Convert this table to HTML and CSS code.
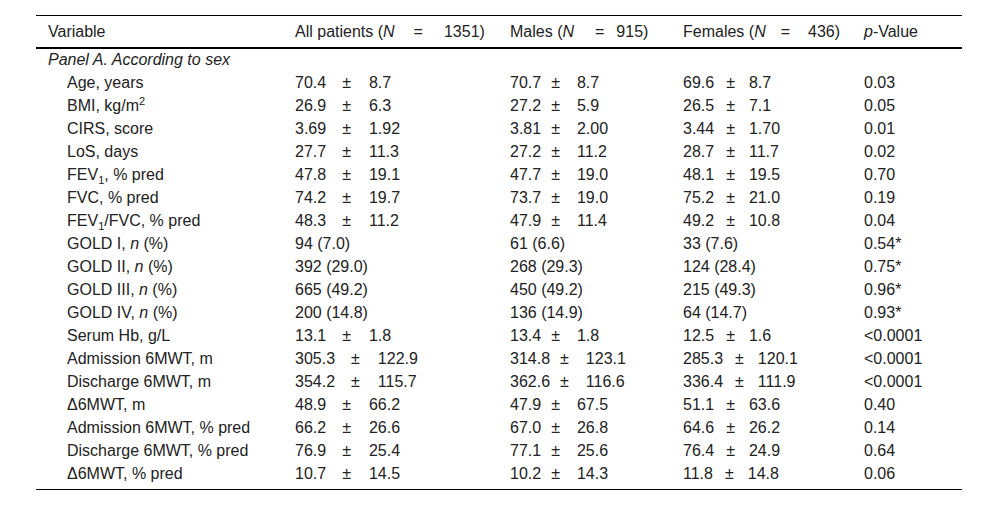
FILE: index.html
```html
<!DOCTYPE html>
<html lang="en">
<head>
<meta charset="utf-8">
<title>Table</title>
<link rel="stylesheet" href="styles.css">
</head>
<body>
<table class="data">
  <colgroup>
    <col class="w1"><col class="w2"><col class="w3"><col class="w4"><col class="w5">
  </colgroup>
  <thead>
    <tr>
      <th>Variable</th>
      <th class="c2">All patients (<i>N</i><span class="eq">=</span>1351)</th>
      <th class="c3">Males (<i>N</i><span class="eq">=</span>915)</th>
      <th class="c4">Females (<i>N</i><span class="eq">=</span>436)</th>
      <th><i>p</i>-Value</th>
    </tr>
  </thead>
  <tbody>
    <tr class="panel"><td colspan="5"><i>Panel A. According to sex</i></td></tr>
    <tr><td class="ind">Age, years</td><td class="c2">70.4<span class="pm">±</span>8.7</td><td class="c3">70.7<span class="pm">±</span>8.7</td><td class="c4">69.6<span class="pm">±</span>8.7</td><td>0.03</td></tr>
    <tr><td class="ind">BMI, kg/m<sup>2</sup></td><td class="c2">26.9<span class="pm">±</span>6.3</td><td class="c3">27.2<span class="pm">±</span>5.9</td><td class="c4">26.5<span class="pm">±</span>7.1</td><td>0.05</td></tr>
    <tr><td class="ind">CIRS, score</td><td class="c2">3.69<span class="pm">±</span>1.92</td><td class="c3">3.81<span class="pm">±</span>2.00</td><td class="c4">3.44<span class="pm">±</span>1.70</td><td>0.01</td></tr>
    <tr><td class="ind">LoS, days</td><td class="c2">27.7<span class="pm">±</span>11.3</td><td class="c3">27.2<span class="pm">±</span>11.2</td><td class="c4">28.7<span class="pm">±</span>11.7</td><td>0.02</td></tr>
    <tr><td class="ind">FEV<sub>1</sub>, % pred</td><td class="c2">47.8<span class="pm">±</span>19.1</td><td class="c3">47.7<span class="pm">±</span>19.0</td><td class="c4">48.1<span class="pm">±</span>19.5</td><td>0.70</td></tr>
    <tr><td class="ind">FVC, % pred</td><td class="c2">74.2<span class="pm">±</span>19.7</td><td class="c3">73.7<span class="pm">±</span>19.0</td><td class="c4">75.2<span class="pm">±</span>21.0</td><td>0.19</td></tr>
    <tr><td class="ind">FEV<sub>1</sub>/FVC, % pred</td><td class="c2">48.3<span class="pm">±</span>11.2</td><td class="c3">47.9<span class="pm">±</span>11.4</td><td class="c4">49.2<span class="pm">±</span>10.8</td><td>0.04</td></tr>
    <tr><td class="ind">GOLD I, <i>n</i> (%)</td><td class="c2">94 (7.0)</td><td class="c3">61 (6.6)</td><td class="c4">33 (7.6)</td><td>0.54*</td></tr>
    <tr><td class="ind">GOLD II, <i>n</i> (%)</td><td class="c2">392 (29.0)</td><td class="c3">268 (29.3)</td><td class="c4">124 (28.4)</td><td>0.75*</td></tr>
    <tr><td class="ind">GOLD III, <i>n</i> (%)</td><td class="c2">665 (49.2)</td><td class="c3">450 (49.2)</td><td class="c4">215 (49.3)</td><td>0.96*</td></tr>
    <tr><td class="ind">GOLD IV, <i>n</i> (%)</td><td class="c2">200 (14.8)</td><td class="c3">136 (14.9)</td><td class="c4">64 (14.7)</td><td>0.93*</td></tr>
    <tr><td class="ind">Serum Hb, g/L</td><td class="c2">13.1<span class="pm">±</span>1.8</td><td class="c3">13.4<span class="pm">±</span>1.8</td><td class="c4">12.5<span class="pm">±</span>1.6</td><td>&lt;0.0001</td></tr>
    <tr><td class="ind">Admission 6MWT, m</td><td class="c2">305.3<span class="pm">±</span>122.9</td><td class="c3">314.8<span class="pm">±</span>123.1</td><td class="c4">285.3<span class="pm">±</span>120.1</td><td>&lt;0.0001</td></tr>
    <tr><td class="ind">Discharge 6MWT, m</td><td class="c2">354.2<span class="pm">±</span>115.7</td><td class="c3">362.6<span class="pm">±</span>116.6</td><td class="c4">336.4<span class="pm">±</span>111.9</td><td>&lt;0.0001</td></tr>
    <tr><td class="ind">Δ6MWT, m</td><td class="c2">48.9<span class="pm">±</span>66.2</td><td class="c3">47.9<span class="pm">±</span>67.5</td><td class="c4">51.1<span class="pm">±</span>63.6</td><td>0.40</td></tr>
    <tr><td class="ind">Admission 6MWT, % pred</td><td class="c2">66.2<span class="pm">±</span>26.6</td><td class="c3">67.0<span class="pm">±</span>26.8</td><td class="c4">64.6<span class="pm">±</span>26.2</td><td>0.14</td></tr>
    <tr><td class="ind">Discharge 6MWT, % pred</td><td class="c2">76.9<span class="pm">±</span>25.4</td><td class="c3">77.1<span class="pm">±</span>25.6</td><td class="c4">76.4<span class="pm">±</span>24.9</td><td>0.64</td></tr>
    <tr class="last"><td class="ind">Δ6MWT, % pred</td><td class="c2">10.7<span class="pm">±</span>14.5</td><td class="c3">10.2<span class="pm">±</span>14.3</td><td class="c4">11.8<span class="pm">±</span>14.8</td><td>0.06</td></tr>
  </tbody>
</table>
</body>
</html>
```

FILE: styles.css
```css
html, body {
  margin: 0;
  padding: 0;
  background: #ffffff;
}

body {
  font-family: "Liberation Sans", Arial, sans-serif;
  font-size: 16px;
  color: #222222;
}

.data {
  margin: 15px 0 0 36px;
  width: 926px;
  table-layout: fixed;
  border-collapse: collapse;
  border-spacing: 0;
}

.w1 { width: 247px; }
.w2 { width: 215px; }
.w3 { width: 173px; }
.w4 { width: 181px; }
.w5 { width: 110px; }

.data th,
.data td {
  padding: 0 0 0 12px;
  text-align: left;
  font-weight: normal;
  white-space: nowrap;
  vertical-align: top;
}

.data thead tr {
  border-top: 1px solid #000;
  border-bottom: 2px solid #000;
}

.data thead th {
  height: 31px;
  line-height: 31px;
}

.data tbody td {
  height: 23px;
  line-height: 23px;
}

.data tbody tr.panel td {
  height: 22px;
  line-height: 22px;
}

.data tbody tr.last {
  border-bottom: 1px solid #000;
}

.data tbody tr.last td {
  padding-bottom: 4px;
}

.data td.ind {
  padding-left: 31px;
}

.pm { display: inline-block; }
.eq { display: inline-block; }

.c2 .pm { margin: 0 18px 0 16px; }
.c3 .pm { margin: 0 17px 0 10px; }
.c4 .pm { margin: 0 14px 0 12px; }

.c2 .eq { margin: 0 21px 0 19px; }
.c3 .eq { margin: 0 12px 0 21px; }
.c4 .eq { margin: 0 18px 0 15px; }

sup, sub {
  font-size: 11px;
  line-height: 0;
  position: relative;
  vertical-align: baseline;
}

sup { top: -6px; }
sub { top: 4px; }
```
